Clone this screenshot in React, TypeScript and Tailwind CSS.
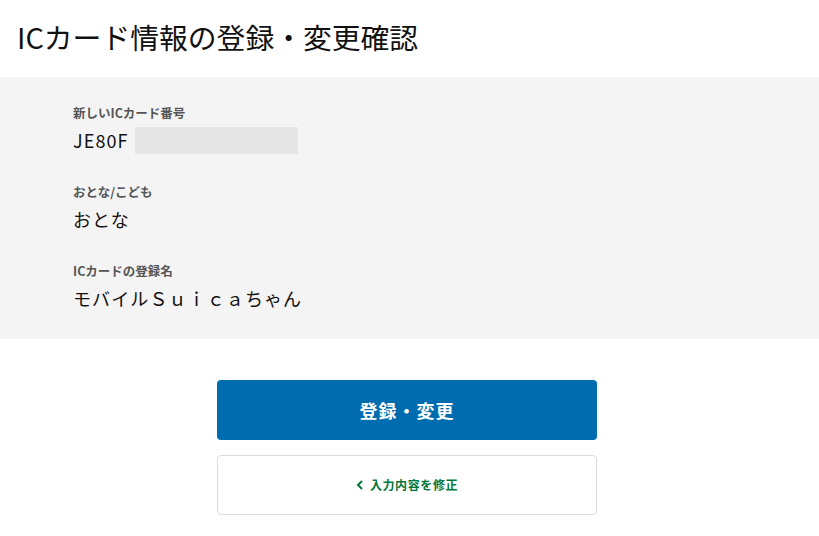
export default function App() {
  const font = { fontFamily: '"Noto Sans CJK JP", "Noto Sans", sans-serif' }
  return (
    <div className="w-[819px] h-[536px] bg-white text-[#111]" style={font}>
      <h1 className="h-[77px] pl-[17px] pt-[17px] text-[28.8px] leading-[40px] font-normal">
        ICカード情報の登録・変更確認
      </h1>

      <div className="bg-[#f4f4f4] h-[262px] pl-[73px] pt-[27px] flex flex-col gap-[28px]">
        <div>
          <p className="text-[12.5px] leading-[18px] font-bold text-[#555]">新しいICカード番号</p>
          <div className="mt-[3px] flex items-center text-[18px] leading-[30px] tracking-[1.1px]">
            <span>JE80F</span>
            <span className="ml-[6px] w-[163px] h-[27px] bg-[#e6e6e6]" />
          </div>
        </div>
        <div>
          <p className="text-[12.5px] leading-[18px] font-bold text-[#555]">おとな/こども</p>
          <p className="mt-[3px] text-[18px] leading-[30px] tracking-[1.1px]">おとな</p>
        </div>
        <div>
          <p className="text-[12.5px] leading-[18px] font-bold text-[#555]">ICカードの登録名</p>
          <p className="mt-[3px] text-[18px] leading-[30px] tracking-[1.1px]">モバイルＳｕｉｃａちゃん</p>
        </div>
      </div>

      <div className="flex flex-col items-start pl-[217px] pt-[41px] gap-[15px]">
        <button className="w-[380px] h-[60px] rounded-[4px] bg-[#006cb0] text-white text-[18px] font-bold tracking-[1px]">
          登録・変更
        </button>
        <button className="w-[380px] h-[60px] rounded-[4px] bg-white border border-[#dcdcdc] text-[#00773c] text-[12px] font-bold tracking-[0.6px] flex items-center justify-center gap-[6px]">
          <svg width="8" height="10" viewBox="0 0 8 10" fill="none">
            <path d="M6 1L2 5l4 4" stroke="currentColor" strokeWidth="2" />
          </svg>
          入力内容を修正
        </button>
      </div>
    </div>
  )
}
